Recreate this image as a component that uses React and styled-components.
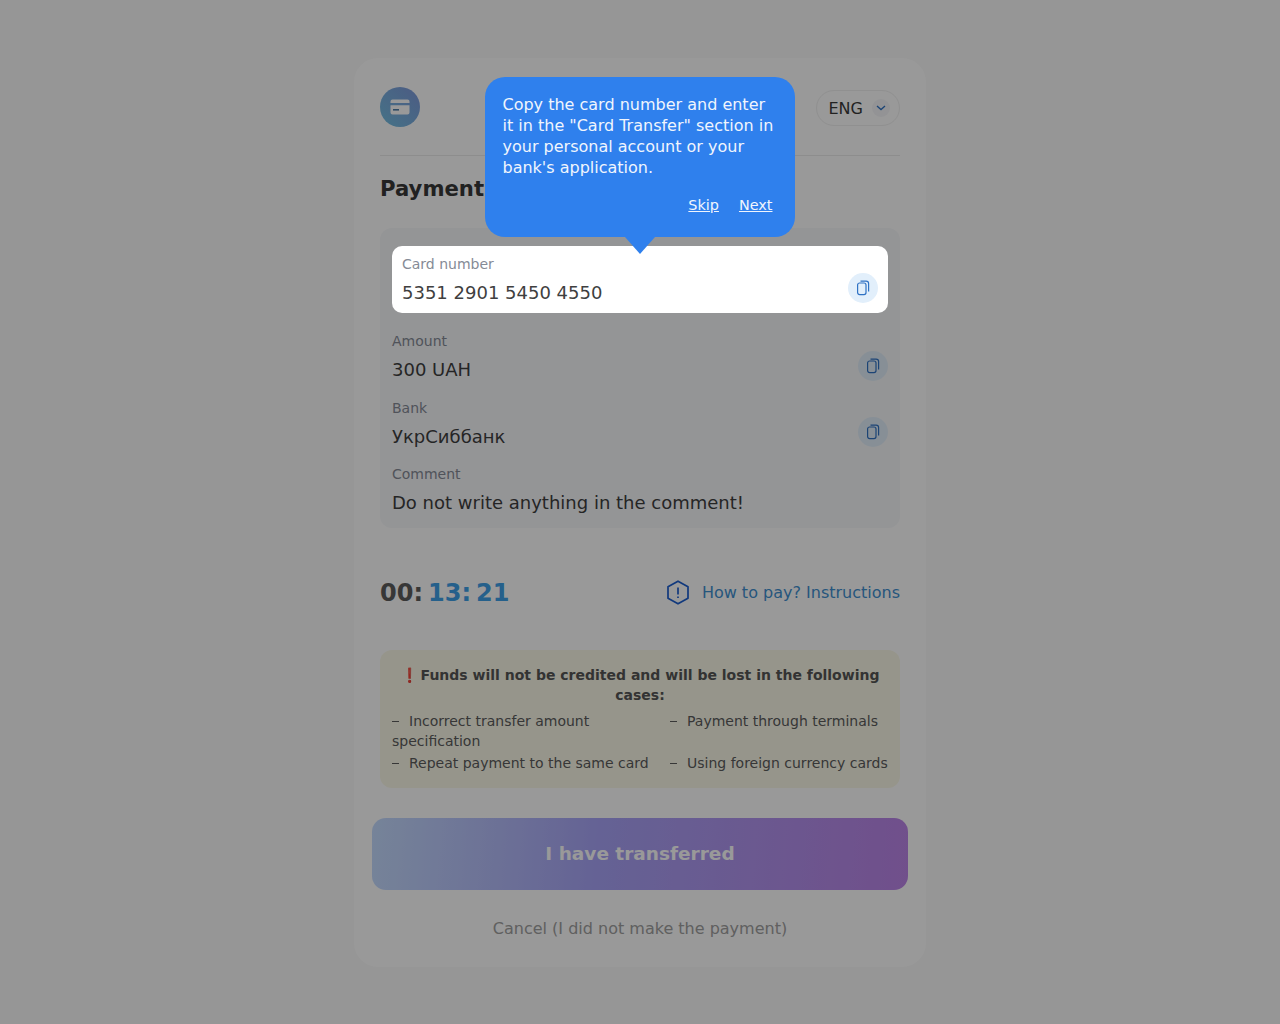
import styled, { createGlobalStyle } from "styled-components";

const GlobalStyle = createGlobalStyle`
  html, body {
    margin: 0;
    padding: 0;
    height: 100%;
    overflow: hidden;
    background: #fafafa;
    font-family: "DejaVu Sans", sans-serif;
  }
  * {
    box-sizing: border-box;
  }
`;

const CopyIcon = () => (
  <svg width="14" height="16" viewBox="0 0 14 16" fill="none" stroke="#2f72c4" strokeWidth="1.2">
    <rect x="1.6" y="3" width="8.4" height="11.6" rx="2" />
    <path d="M4.5 1.2h5.7a2.4 2.4 0 0 1 2.4 2.4v7.8" />
  </svg>
);

const CardIcon = () => (
  <svg width="20" height="16" viewBox="0 0 20 16">
    <path
      fill="#fff"
      d="M2.5 0.5h15a2 2 0 0 1 2 2v1.6H0.5V2.5a2 2 0 0 1 2-2zM0.5 6.2h19v7.3a2 2 0 0 1-2 2h-15a2 2 0 0 1-2-2z"
    />
    <rect x="3" y="10" width="6" height="1.6" fill="#4f7fa8" />
  </svg>
);

const ChevronIcon = () => (
  <svg width="10" height="6" viewBox="0 0 10 6" fill="none" stroke="#2f72c4" strokeWidth="1.3">
    <path d="M1 1l4 3.6L9 1" />
  </svg>
);

const HexIcon = () => (
  <svg width="24" height="25" viewBox="0 0 24 25" fill="none" stroke="#1d5fd0" strokeWidth="1.7">
    <path d="M12 1.2l10 5.6v11.4l-10 5.6-10-5.6V6.8z" strokeLinejoin="round" />
    <path d="M12 7.5v7M12 16.5v1.6" />
  </svg>
);

const Page = styled.div`
  display: flex;
  justify-content: center;
  height: 1024px;
  padding-top: 58px;
`;

const Card = styled.div`
  width: 572px;
  height: 909px;
  padding: 29px 26px 0;
  background: #fff;
  border-radius: 24px;
  display: flex;
  flex-direction: column;
`;

const Header = styled.header`
  display: flex;
  align-items: center;
  justify-content: space-between;
  height: 40px;
`;

const Logo = styled.div`
  width: 40px;
  height: 40px;
  border-radius: 50%;
  background: linear-gradient(45deg, #74c0e0, #7f98dc);
  display: flex;
  align-items: center;
  justify-content: center;
`;

const LangButton = styled.div`
  width: 84px;
  height: 36px;
  margin-top: 2px;
  padding: 0 9px 0 11.5px;
  border: 1px solid #f0f0f0;
  border-radius: 18px;
  display: flex;
  align-items: center;
  justify-content: space-between;
  font-size: 16px;
  color: #3a3a3a;
`;

const ChevronWrap = styled.span`
  width: 18px;
  height: 18px;
  border-radius: 50%;
  background: #f5f6f9;
  display: flex;
  align-items: center;
  justify-content: center;
`;

const Divider = styled.div`
  height: 1px;
  margin-top: 28px;
  background: #ececec;
`;

const Title = styled.h1`
  margin: 20px 0 0;
  font-size: 21.2px;
  line-height: 26px;
  font-weight: 700;
  color: #383838;
`;

const Panel = styled.section`
  margin-top: 26px;
  padding: 18px 12px 0;
  height: 300px;
  background: #f7f8fb;
  border-radius: 12px;
  display: flex;
  flex-direction: column;
`;

const Row = styled.div`
  position: relative;
  height: ${(p) => (p.$active ? "67px" : "66.5px")};
  padding-top: ${(p) => (p.$active ? "8px" : "18px")};
  padding-left: ${(p) => (p.$active ? "10px" : "0")};
  padding-right: ${(p) => (p.$active ? "10px" : "0")};
  display: flex;
  justify-content: space-between;
  align-items: flex-start;
  ${(p) =>
    p.$active &&
    `
    z-index: 20;
    background: #fff;
    border-radius: 10px;
  `}
`;

const RowText = styled.div`
  display: flex;
  flex-direction: column;
  gap: 6px;
`;

const Label = styled.span`
  font-size: 14px;
  line-height: 20px;
  color: #858b96;
`;

const Value = styled.span`
  font-size: 18px;
  line-height: 26px;
  color: #3f3f3f;
`;

const CopyButton = styled.span`
  width: 30px;
  height: 30px;
  border-radius: 50%;
  background: #e2effb;
  display: flex;
  align-items: center;
  justify-content: center;
  align-self: flex-end;
  margin-bottom: ${(p) => (p.$active ? "10px" : "-1px")};
`;

const TimerRow = styled.div`
  margin-top: 46px;
  height: 36px;
  display: flex;
  align-items: center;
  justify-content: space-between;
`;

const Timer = styled.div`
  display: flex;
  gap: 5px;
  margin-top: 2px;
  font-size: 24px;
  font-weight: 700;
`;

const TimerPart = styled.span`
  color: ${(p) => (p.$blue ? "#3fa0e8" : "#5c5c5c")};
`;

const HowTo = styled.a`
  display: flex;
  align-items: center;
  gap: 12px;
  font-size: 16px;
  color: #3f8fd0;
`;

const Warning = styled.section`
  margin-top: 40px;
  height: 138px;
  padding: 15px 12px 0;
  background: #fbf9e8;
  border-radius: 12px;
  font-size: 14px;
  color: #5c5c5c;
`;

const WarningTitle = styled.div`
  font-weight: 700;
  line-height: 20px;
  text-align: center;
  color: #555;
`;

const Mark = styled.span`
  color: #b01030;
  margin-right: 3px;
`;

const WarningGrid = styled.ul`
  list-style: none;
  margin: 6px 0 0;
  padding: 0;
  display: grid;
  grid-template-columns: 266px 218px;
  column-gap: 12px;
  row-gap: 2px;
`;

const WarningItem = styled.li`
  line-height: 20px;
  white-space: ${(p) => (p.$wrap ? "normal" : "nowrap")};
  &::before {
    content: "";
    display: inline-block;
    width: 7px;
    height: 1px;
    margin-right: 10px;
    vertical-align: 4px;
    background: currentColor;
  }
`;

const PayButton = styled.button`
  margin: 30px -8px 0;
  height: 72px;
  padding-bottom: 3px;
  border: none;
  border-radius: 14px;
  background: linear-gradient(95deg, #c5dcff 0%, #a8a4f8 42%, #bc84e8 100%);
  color: #ffffff;
  font-family: inherit;
  font-size: 18.5px;
  font-weight: 700;
`;

const CancelLink = styled.div`
  margin-top: 29px;
  text-align: center;
  font-size: 16px;
  line-height: 20px;
  color: #a0a0a0;
`;

const Overlay = styled.div`
  position: fixed;
  inset: 0;
  z-index: 10;
  background: rgba(0, 0, 0, 0.4);
`;

const Tooltip = styled.div`
  position: absolute;
  left: 93px;
  bottom: 76px;
  width: 310px;
  height: 160px;
  padding: 17px 17.5px 0;
  background: #2f80ed;
  border-radius: 20px;
  color: #f0f5fd;
  font-size: 16px;
  line-height: 21px;
  &::after {
    content: "";
    position: absolute;
    left: 140px;
    bottom: -17px;
    border-left: 15px solid transparent;
    border-right: 15px solid transparent;
    border-top: 17px solid #2f80ed;
  }
`;

const TooltipActions = styled.div`
  display: flex;
  justify-content: flex-end;
  gap: 20px;
  margin-top: 17px;
  padding-right: 5px;
  font-size: 14.4px;
`;

const TooltipLink = styled.a`
  color: inherit;
  text-decoration: underline;
`;

export default function App() {
  return (
    <>
      <GlobalStyle />
      <Page>
        <Card>
          <Header>
            <Logo>
              <CardIcon />
            </Logo>
            <LangButton>
              ENG
              <ChevronWrap>
                <ChevronIcon />
              </ChevronWrap>
            </LangButton>
          </Header>
          <Divider />
          <Title>Payment</Title>
          <Panel>
            <Row $active>
              <RowText>
                <Label>Card number</Label>
                <Value>5351 2901 5450 4550</Value>
              </RowText>
              <CopyButton $active>
                <CopyIcon />
              </CopyButton>
              <Tooltip>
                Copy the card number and enter it in the "Card Transfer" section in your personal account or your bank's application.
                <TooltipActions>
                  <TooltipLink>Skip</TooltipLink>
                  <TooltipLink>Next</TooltipLink>
                </TooltipActions>
              </Tooltip>
            </Row>
            <Row>
              <RowText>
                <Label>Amount</Label>
                <Value>300 UAH</Value>
              </RowText>
              <CopyButton>
                <CopyIcon />
              </CopyButton>
            </Row>
            <Row>
              <RowText>
                <Label>Bank</Label>
                <Value>УкрСиббанк</Value>
              </RowText>
              <CopyButton>
                <CopyIcon />
              </CopyButton>
            </Row>
            <Row>
              <RowText>
                <Label>Comment</Label>
                <Value>Do not write anything in the comment!</Value>
              </RowText>
            </Row>
          </Panel>
          <TimerRow>
            <Timer>
              <TimerPart>00:</TimerPart>
              <TimerPart $blue>13:</TimerPart>
              <TimerPart $blue>21</TimerPart>
            </Timer>
            <HowTo>
              <HexIcon />
              How to pay? Instructions
            </HowTo>
          </TimerRow>
          <Warning>
            <WarningTitle>
              <Mark>❗</Mark>Funds will not be credited and will be lost in the following cases:
            </WarningTitle>
            <WarningGrid>
              <WarningItem $wrap>Incorrect transfer amount specification</WarningItem>
              <WarningItem>Payment through terminals</WarningItem>
              <WarningItem>Repeat payment to the same card</WarningItem>
              <WarningItem>Using foreign currency cards</WarningItem>
            </WarningGrid>
          </Warning>
          <PayButton>I have transferred</PayButton>
          <CancelLink>Cancel (I did not make the payment)</CancelLink>
        </Card>
      </Page>
      <Overlay />
    </>
  );
}
